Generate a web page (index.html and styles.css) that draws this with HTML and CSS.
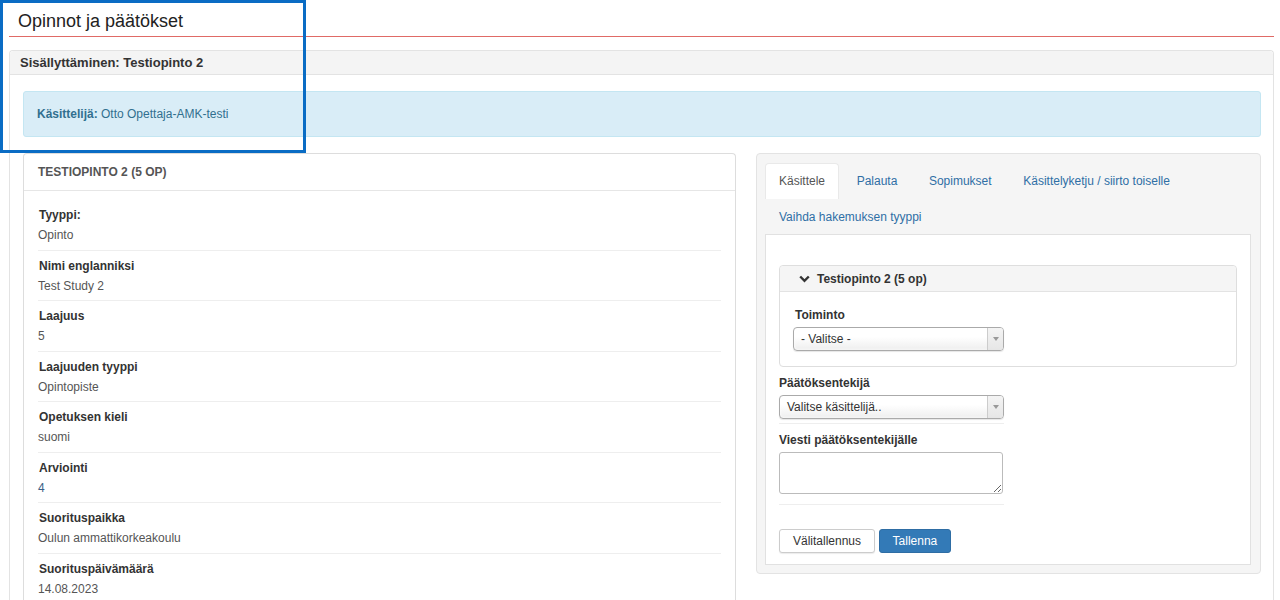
FILE: index.html
```html
<!DOCTYPE html>
<html lang="fi">
<head>
<meta charset="utf-8">
<title>Opinnot ja päätökset</title>
<link rel="stylesheet" href="styles.css">
</head>
<body>
<div class="page">
  <h1 class="page-title">Opinnot ja päätökset</h1>

  <section class="panel outer">
    <div class="panel-heading">Sisällyttäminen: Testiopinto 2</div>
    <div class="panel-body outer-body">
      <div class="alert-info"><b>Käsittelijä:</b> Otto Opettaja-AMK-testi</div>

      <div class="columns">
        <div class="panel details">
          <div class="details-heading">Testiopinto 2 (5 op)</div>
          <div class="details-body">
            <div class="field"><div class="field-label">Tyyppi:</div><div class="field-value">Opinto</div></div>
            <div class="field"><div class="field-label">Nimi englanniksi</div><div class="field-value">Test Study 2</div></div>
            <div class="field"><div class="field-label">Laajuus</div><div class="field-value">5</div></div>
            <div class="field"><div class="field-label">Laajuuden tyyppi</div><div class="field-value">Opintopiste</div></div>
            <div class="field"><div class="field-label">Opetuksen kieli</div><div class="field-value">suomi</div></div>
            <div class="field"><div class="field-label">Arviointi</div><div class="field-value grade">4</div></div>
            <div class="field"><div class="field-label">Suorituspaikka</div><div class="field-value">Oulun ammattikorkeakoulu</div></div>
            <div class="field"><div class="field-label">Suorituspäivämäärä</div><div class="field-value">14.08.2023</div></div>
          </div>
        </div>

        <div class="well">
          <ul class="tabs">
            <li class="tab active">Käsittele</li>
            <li class="tab">Palauta</li>
            <li class="tab">Sopimukset</li>
            <li class="tab">Käsittelyketju / siirto toiselle</li>
            <li class="tab">Vaihda hakemuksen tyyppi</li>
          </ul>
          <div class="tab-content">
            <div class="panel inner">
              <div class="inner-heading">
                <svg class="chevron" width="11" height="8" viewBox="0 0 11 8"><path d="M1.2 1.5 L5.5 5.8 L9.8 1.5" fill="none" stroke="#333" stroke-width="2.4"/></svg>
                <span>Testiopinto 2 (5 op)</span>
              </div>
              <div class="inner-body">
                <div class="form-label">Toiminto</div>
                <div class="select narrow">
                  <span class="select-text">- Valitse -</span>
                  <span class="select-arrow"><i></i></span>
                </div>
              </div>
            </div>

            <div class="form-group">
              <div class="form-label">Päätöksentekijä</div>
              <div class="select">
                <span class="select-text">Valitse käsittelijä..</span>
                <span class="select-arrow"><i></i></span>
              </div>
            </div>
            <div class="form-group">
              <div class="form-label">Viesti päätöksentekijälle</div>
              <textarea class="message"></textarea>
            </div>
            <div class="buttons">
              <button class="btn btn-default">Välitallennus</button>
              <button class="btn btn-primary">Tallenna</button>
            </div>
          </div>
        </div>
      </div>
    </div>
  </section>
</div>
<div class="highlight"></div>
</body>
</html>
```

FILE: styles.css
```css
* { box-sizing: border-box; }

body {
  margin: 0;
  background: #fff;
  font-family: "Liberation Sans", Arial, sans-serif;
  font-size: 12px;
  color: #333;
}

.page {
  padding: 0 6px 0 9px;
}

.page-title {
  margin: 0 0 13px;
  padding: 11px 9px 5px;
  font-size: 18px;
  line-height: 20px;
  font-weight: normal;
  color: #222;
  border-bottom: 1px solid #e06a66;
}

.panel {
  background: #fff;
  border: 1px solid #ddd;
  border-radius: 4px;
}

.outer {
  border-color: #e3e3e3;
  border-bottom: none;
}

.panel-heading {
  padding: 4px 10px;
  line-height: 15px;
  font-size: 13px;
  font-weight: bold;
  color: #333;
  background: #f4f4f4;
  border-bottom: 1px solid #e3e3e3;
  border-radius: 4px 4px 0 0;
}

.outer-body {
  padding: 16px 12px 0 13px;
}

.alert-info {
  padding: 14px 13px;
  line-height: 16px;
  background: #d9edf7;
  border: 1px solid #c4e6f2;
  border-radius: 3px;
  color: #31708f;
  margin-bottom: 16px;
}

.columns {
  display: grid;
  grid-template-columns: 713px 505px;
  column-gap: 20px;
  align-items: start;
}

.details {
  border-bottom: none;
}

.details-heading {
  padding: 0 14px;
  line-height: 36px;
  font-weight: bold;
  text-transform: uppercase;
  color: #555;
  border-bottom: 1px solid #e6e6e6;
}

.details-body {
  padding: 9px 14px 10px;
}

.field {
  padding: 5px 0 4.5px;
  border-bottom: 1px solid #eee;
}

.field:last-child { border-bottom: none; }

.field-label {
  font-weight: bold;
  line-height: 20px;
  color: #333;
  padding-left: 1px;
}

.field-value {
  line-height: 21px;
  margin-bottom: -1px;
  color: #555;
}

.grade { color: #3d5f86; }

.well {
  background: #f5f5f5;
  border: 1px solid #e3e3e3;
  border-radius: 4px;
  padding: 9px 9px 8px 8px;
}

.tabs {
  list-style: none;
  margin: 0;
  padding: 0;
  display: flex;
  flex-wrap: wrap;
}

.tab {
  height: 36px;
  line-height: 35px;
  padding: 0 13px;
  margin-right: 3.6px;
  color: #2f6fa5;
  border: 1px solid transparent;
  border-bottom: none;
  border-radius: 4px 4px 0 0;
  white-space: nowrap;
}

.tab.active {
  background: #fff;
  color: #555;
  border-color: #e9e9e9;
}

.tab-content {
  margin-top: -1px;
  background: #fff;
  border: 1px solid #e1e1e1;
  padding: 30px 13px 11px;
}

.inner {
  border-color: #dedede;
  margin-bottom: 8px;
}

.inner-heading {
  display: flex;
  align-items: center;
  height: 26px;
  padding: 0 19px;
  background: #f5f5f5;
  border-bottom: 1px solid #e3e3e3;
  border-radius: 4px 4px 0 0;
  font-weight: bold;
  color: #333;
}

.chevron { margin-right: 7px; flex: none; }

.inner-body {
  padding: 15px 15px 15px 13px;
}

.form-label {
  font-weight: bold;
  line-height: 16px;
  color: #333;
  margin-bottom: 4px;
}

.inner-body .form-label { padding-left: 2px; }

.select {
  display: flex;
  width: 225px;
  height: 24px;
  border: 1px solid #aaa;
  border-radius: 4px;
  background: linear-gradient(#fff 40%, #eee);
  box-shadow: 0 0 3px #fff inset, 0 1px 1px rgba(0,0,0,0.1);
  overflow: hidden;
}

.select.narrow { width: 211px; }

.select-text {
  flex: 1;
  padding-left: 7px;
  line-height: 22px;
  color: #333;
}

.select-arrow {
  width: 16px;
  border-left: 1px solid #ccc;
  background: linear-gradient(#f4f4f4, #e6e6e6);
  display: flex;
  align-items: center;
  justify-content: center;
}

.select-arrow i {
  width: 0;
  height: 0;
  border-left: 3px solid transparent;
  border-right: 3px solid transparent;
  border-top: 4px solid #999;
}

.form-group {
  width: 225px;
  padding-bottom: 4px;
  border-bottom: 1px solid #eee;
  margin-bottom: 8px;
}

.form-group + .form-group {
  padding-bottom: 10px;
  margin-bottom: 24px;
}

.message {
  display: block;
  width: 224px;
  height: 42px;
  border: 1px solid #bbb;
  border-radius: 3px;
  margin: 3px 0 0;
  resize: both;
  font-family: inherit;
}

.buttons {
  display: flex;
  gap: 4px;
}

.btn {
  height: 24px;
  padding: 0 13px;
  font-family: inherit;
  font-size: 12px;
  border-radius: 3px;
  border: 1px solid #ccc;
  cursor: pointer;
}

.btn-default {
  background: #fff;
  color: #333;
  box-shadow: 0 1px 1px rgba(0,0,0,0.08);
}

.btn-primary {
  background: #337ab7;
  border-color: #2e6da4;
  color: #fff;
  padding: 0 12.5px;
}

.highlight {
  position: absolute;
  left: 0;
  top: 0;
  width: 306px;
  height: 153px;
  border: 3px solid #0a6cc4;
  pointer-events: none;
}
```
